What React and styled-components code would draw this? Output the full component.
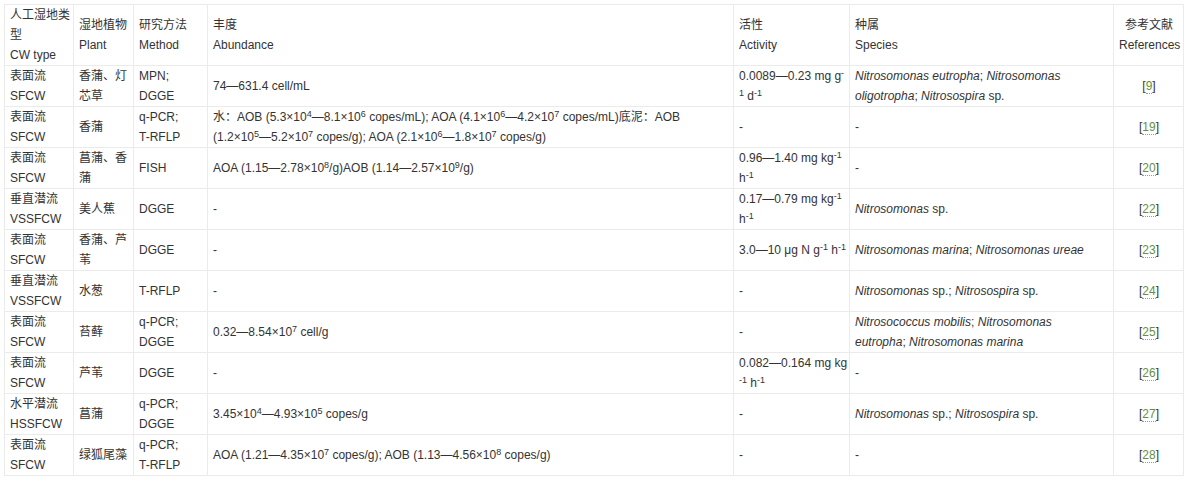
import React from 'react';
import styled, { createGlobalStyle } from 'styled-components';

const GlobalStyle = createGlobalStyle`
  html, body {
    margin: 0;
    padding: 0;
    background: #fff;
  }
  body {
    font-family: "Liberation Sans", Arial, "Noto Sans CJK SC", sans-serif;
    font-size: 12px;
    color: #333;
  }
`;

const Wrapper = styled.div`
  padding: 4px;
`;

const Table = styled.table`
  border-collapse: collapse;
  table-layout: fixed;
  width: 1179px;
  border: 1px solid #ebebeb;
`;

const Cell = styled.td`
  border: 1px solid #ebebeb;
  padding: 0 4px 0 5px;
  line-height: 20px;
  vertical-align: middle;
  text-align: ${(p) => (p.center ? 'center' : 'left')};
  white-space: nowrap;
  sup {
    font-size: 9px;
    line-height: 0;
    vertical-align: 4px;
  }
  i {
    font-style: italic;
  }
`;

const HeadCell = styled(Cell).attrs({ as: 'th' })`
  font-weight: normal;
  height: 60px;
`;

const Row = styled.tr`
  height: 40px;
`;

const RefLink = styled.a`
  color: #6a8f3a;
  text-decoration: none;
  border-bottom: 1px dotted #999;
`;

const Ref = ({ n }) => (
  <>
    [<RefLink>{n}</RefLink>]
  </>
);

const widths = [69, 60, 74, 526, 116, 264, 70];

const rows = [
  {
    type: ['表面流', 'SFCW'],
    plant: <>香蒲、灯<br />芯草</>,
    method: <>MPN;<br />DGGE</>,
    abundance: '74—631.4 cell/mL',
    activity: <>0.0089—0.23 mg g<sup>-</sup><br /><sup>1</sup> d<sup>-1</sup></>,
    species: <><i>Nitrosomonas eutropha</i>; <i>Nitrosomonas</i><br /><i>oligotropha</i>; <i>Nitrosospira</i> sp.</>,
    ref: 9,
  },
  {
    type: ['表面流', 'SFCW'],
    plant: '香蒲',
    method: <>q-PCR;<br />T-RFLP</>,
    abundance: (
      <>
        水：AOB (5.3×10<sup>4</sup>—8.1×10<sup>6</sup> copes/mL); AOA (4.1×10<sup>6</sup>—4.2×10<sup>7</sup> copes/mL)底泥：AOB
        <br />
        (1.2×10<sup>5</sup>—5.2×10<sup>7</sup> copes/g); AOA (2.1×10<sup>6</sup>—1.8×10<sup>7</sup> copes/g)
      </>
    ),
    activity: '-',
    species: '-',
    ref: 19,
  },
  {
    type: ['表面流', 'SFCW'],
    plant: <>菖蒲、香<br />蒲</>,
    method: 'FISH',
    abundance: <>AOA (1.15—2.78×10<sup>8</sup>/g)AOB (1.14—2.57×10<sup>9</sup>/g)</>,
    activity: <>0.96—1.40 mg kg<sup>-1</sup><br />h<sup>-1</sup></>,
    species: '-',
    ref: 20,
  },
  {
    type: ['垂直潜流', 'VSSFCW'],
    plant: '美人蕉',
    method: 'DGGE',
    abundance: '-',
    activity: <>0.17—0.79 mg kg<sup>-1</sup><br />h<sup>-1</sup></>,
    species: <><i>Nitrosomonas</i> sp.</>,
    ref: 22,
  },
  {
    type: ['表面流', 'SFCW'],
    plant: <>香蒲、芦<br />苇</>,
    method: 'DGGE',
    abundance: '-',
    activity: <>3.0—10 μg N g<sup>-1</sup> h<sup>-1</sup></>,
    species: <><i>Nitrosomonas marina</i>; <i>Nitrosomonas ureae</i></>,
    ref: 23,
  },
  {
    type: ['垂直潜流', 'VSSFCW'],
    plant: '水葱',
    method: 'T-RFLP',
    abundance: '-',
    activity: '-',
    species: <><i>Nitrosomonas</i> sp.; <i>Nitrosospira</i> sp.</>,
    ref: 24,
  },
  {
    type: ['表面流', 'SFCW'],
    plant: '苔藓',
    method: <>q-PCR;<br />DGGE</>,
    abundance: <>0.32—8.54×10<sup>7</sup> cell/g</>,
    activity: '-',
    species: <><i>Nitrosococcus mobilis</i>; <i>Nitrosomonas</i><br /><i>eutropha</i>; <i>Nitrosomonas marina</i></>,
    ref: 25,
  },
  {
    type: ['表面流', 'SFCW'],
    plant: '芦苇',
    method: 'DGGE',
    abundance: '-',
    activity: <>0.082—0.164 mg kg<br /><sup>-1</sup> h<sup>-1</sup></>,
    species: '-',
    ref: 26,
  },
  {
    type: ['水平潜流', 'HSSFCW'],
    plant: '菖蒲',
    method: <>q-PCR;<br />DGGE</>,
    abundance: <>3.45×10<sup>4</sup>—4.93×10<sup>5</sup> copes/g</>,
    activity: '-',
    species: <><i>Nitrosomonas</i> sp.; <i>Nitrosospira</i> sp.</>,
    ref: 27,
  },
  {
    type: ['表面流', 'SFCW'],
    plant: '绿狐尾藻',
    method: <>q-PCR;<br />T-RFLP</>,
    abundance: <>AOA (1.21—4.35×10<sup>7</sup> copes/g); AOB (1.13—4.56×10<sup>8</sup> copes/g)</>,
    activity: '-',
    species: '-',
    ref: 28,
  },
];

const App = () => {
  return (
    <Wrapper>
      <GlobalStyle />
      <Table>
        <colgroup>
          {widths.map((w, i) => (
            <col key={i} style={{ width: w }} />
          ))}
        </colgroup>
        <thead>
          <tr>
            <HeadCell>人工湿地类<br />型<br />CW type</HeadCell>
            <HeadCell>湿地植物<br />Plant</HeadCell>
            <HeadCell>研究方法<br />Method</HeadCell>
            <HeadCell>丰度<br />Abundance</HeadCell>
            <HeadCell>活性<br />Activity</HeadCell>
            <HeadCell>种属<br />Species</HeadCell>
            <HeadCell center>参考文献<br />References</HeadCell>
          </tr>
        </thead>
        <tbody>
          {rows.map((r, i) => (
            <Row key={i}>
              <Cell>{r.type[0]}<br />{r.type[1]}</Cell>
              <Cell>{r.plant}</Cell>
              <Cell>{r.method}</Cell>
              <Cell>{r.abundance}</Cell>
              <Cell>{r.activity}</Cell>
              <Cell>{r.species}</Cell>
              <Cell center><Ref n={r.ref} /></Cell>
            </Row>
          ))}
        </tbody>
      </Table>
    </Wrapper>
  );
};

export default App;
